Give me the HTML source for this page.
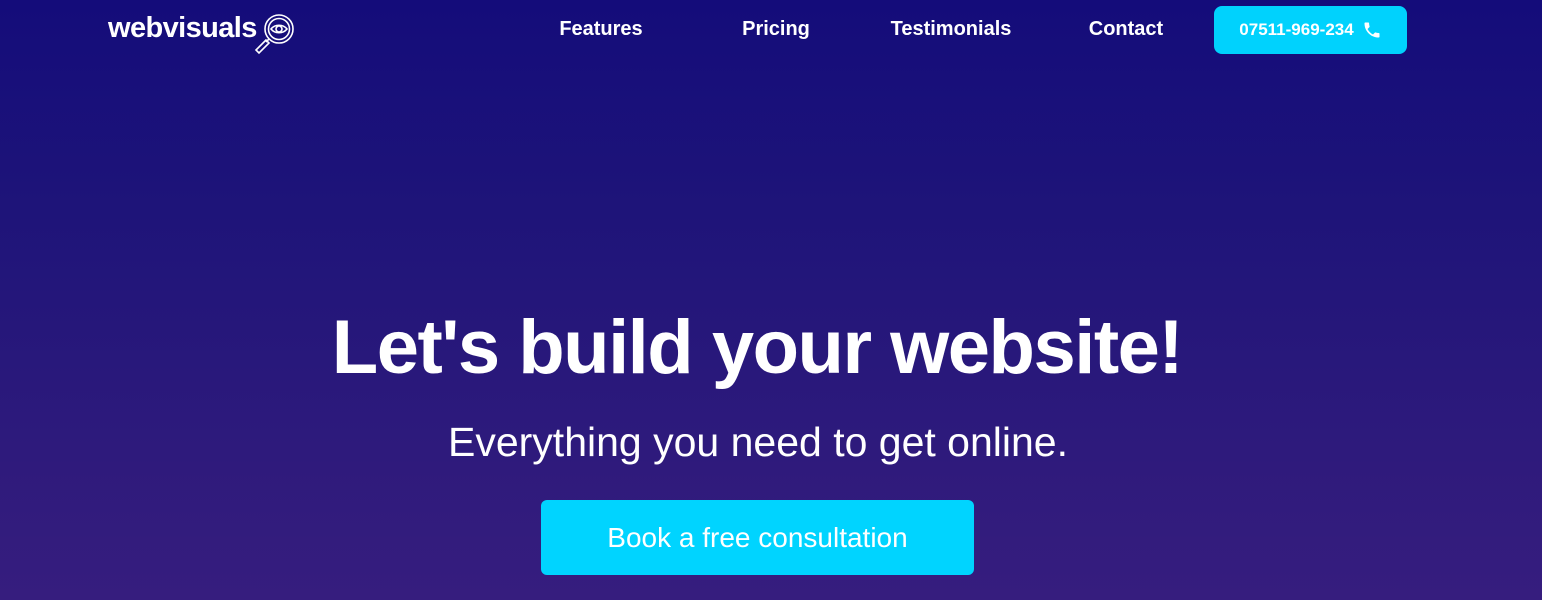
<!DOCTYPE html>
<html><head><style>
*{margin:0;padding:0;box-sizing:border-box}
html,body{width:1542px;height:600px;overflow:hidden}
body{background:linear-gradient(180deg,#140c7a 0%,#1e1479 35%,#2e1a7c 75%,#361d7e 100%);font-family:"Liberation Sans",sans-serif;color:#fff;position:relative}
.logo{position:absolute;left:108px;top:12px;font-size:29px;font-weight:bold;letter-spacing:-0.6px}
.nav a{position:absolute;top:18px;font-size:20px;font-weight:bold;color:#fff;text-decoration:none;transform:translateX(-50%);white-space:nowrap}
.phone{position:absolute;left:1214px;top:6px;width:193px;height:48px;background:#00d2fd;border-radius:8px;font-size:17px;font-weight:bold;display:flex;align-items:center;justify-content:center;gap:8px}
h1{position:absolute;left:0;width:1542px;text-align:center;top:304px;font-size:76px;font-weight:bold;letter-spacing:-1.5px;transform:translateX(-14px)}
.sub{position:absolute;left:0;width:1542px;text-align:center;top:419px;font-size:41px;transform:translateX(-13px)}
.btn{position:absolute;left:541px;top:500px;width:433px;height:75px;background:#00d4ff;border-radius:6px;font-size:28px;display:flex;align-items:center;justify-content:center}
</style></head><body>
<div class="logo">webvisuals</div>
<svg style="position:absolute;left:252px;top:12px" width="44" height="44" viewBox="0 0 44 44" fill="none" stroke="#fff" stroke-width="1.6">
<circle cx="27" cy="17" r="14"/><circle cx="27" cy="17" r="10.5"/>
<path d="M19 17c4-5 12-5 16 0c-4 5-12 5-16 0z"/><circle cx="27" cy="17" r="3"/>
<path d="M17 27l-3 3M14 28l-10 10 3 3 10-10z"/></svg>
<div class="nav">
<a style="left:601px">Features</a>
<a style="left:776px">Pricing</a>
<a style="left:951px">Testimonials</a>
<a style="left:1126px">Contact</a>
</div>
<div class="phone">07511-969-234
<svg width="20" height="20" viewBox="0 0 24 24" fill="#fff"><path d="M6.6 10.8c1.4 2.8 3.8 5.1 6.6 6.6l2.2-2.2c.3-.3.7-.4 1-.2 1.1.4 2.300.6 3.6.6.6 0 1 .4 1 1V20c0 .6-.4 1-1 1C10.6 21 3 13.4 3 4c0-.6.4-1 1-1h3.5c.6 0 1 .4 1 1 0 1.3.2 2.5.6 3.6.1.3 0 .7-.2 1z"/></svg></div>
<h1>Let's build your website!</h1>
<div class="sub">Everything you need to get online.</div>
<div class="btn">Book a free consultation</div>
</body></html>
